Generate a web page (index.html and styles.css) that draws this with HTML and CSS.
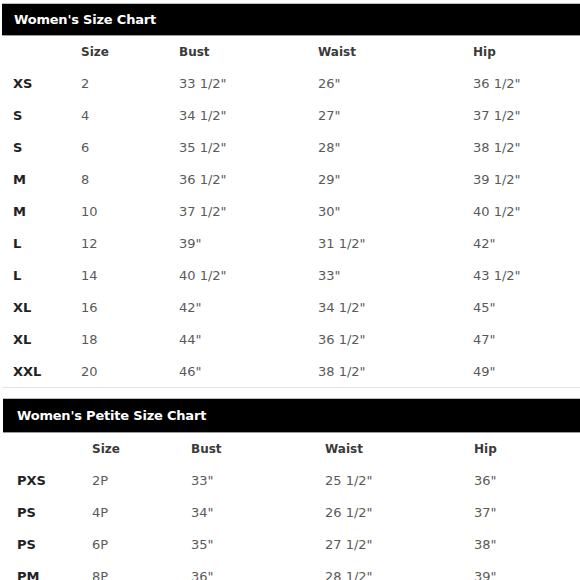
FILE: index.html
```html
<!DOCTYPE html>
<html lang="en">
<head>
<meta charset="utf-8">
<title>Women's Size Chart</title>
<link rel="stylesheet" href="styles.css">
</head>
<body>
<main class="page">
  <section class="chart chart-regular">
    <h2 class="chart-title">Women's Size Chart</h2>
    <div class="chart-grid">
      <span class="cell head-blank"></span><span class="cell head">Size</span><span class="cell head">Bust</span><span class="cell head">Waist</span><span class="cell head">Hip</span>
      <span class="cell label">XS</span><span class="cell">2</span><span class="cell">33 1/2"</span><span class="cell">26"</span><span class="cell">36 1/2"</span>
      <span class="cell label">S</span><span class="cell">4</span><span class="cell">34 1/2"</span><span class="cell">27"</span><span class="cell">37 1/2"</span>
      <span class="cell label">S</span><span class="cell">6</span><span class="cell">35 1/2"</span><span class="cell">28"</span><span class="cell">38 1/2"</span>
      <span class="cell label">M</span><span class="cell">8</span><span class="cell">36 1/2"</span><span class="cell">29"</span><span class="cell">39 1/2"</span>
      <span class="cell label">M</span><span class="cell">10</span><span class="cell">37 1/2"</span><span class="cell">30"</span><span class="cell">40 1/2"</span>
      <span class="cell label">L</span><span class="cell">12</span><span class="cell">39"</span><span class="cell">31 1/2"</span><span class="cell">42"</span>
      <span class="cell label">L</span><span class="cell">14</span><span class="cell">40 1/2"</span><span class="cell">33"</span><span class="cell">43 1/2"</span>
      <span class="cell label">XL</span><span class="cell">16</span><span class="cell">42"</span><span class="cell">34 1/2"</span><span class="cell">45"</span>
      <span class="cell label">XL</span><span class="cell">18</span><span class="cell">44"</span><span class="cell">36 1/2"</span><span class="cell">47"</span>
      <span class="cell label">XXL</span><span class="cell">20</span><span class="cell">46"</span><span class="cell">38 1/2"</span><span class="cell">49"</span>
    </div>
  </section>
  <section class="chart chart-petite">
    <h2 class="chart-title">Women's Petite Size Chart</h2>
    <div class="chart-grid">
      <span class="cell head-blank"></span><span class="cell head">Size</span><span class="cell head">Bust</span><span class="cell head">Waist</span><span class="cell head">Hip</span>
      <span class="cell label">PXS</span><span class="cell">2P</span><span class="cell">33"</span><span class="cell">25 1/2"</span><span class="cell">36"</span>
      <span class="cell label">PS</span><span class="cell">4P</span><span class="cell">34"</span><span class="cell">26 1/2"</span><span class="cell">37"</span>
      <span class="cell label">PS</span><span class="cell">6P</span><span class="cell">35"</span><span class="cell">27 1/2"</span><span class="cell">38"</span>
      <span class="cell label">PM</span><span class="cell">8P</span><span class="cell">36"</span><span class="cell">28 1/2"</span><span class="cell">39"</span>
    </div>
  </section>
</main>
</body>
</html>
```
FILE: styles.css
```css
html, body {
  margin: 0;
  padding: 0;
  background: #ffffff;
}
body {
  font-family: "DejaVu Sans", Verdana, sans-serif;
  width: 580px;
  height: 580px;
  overflow: hidden;
}
.page {
  display: flex;
  flex-direction: column;
  padding-top: 4px;
}
.chart-title {
  margin: 0;
  background: #000000;
  color: #ffffff;
  font-size: 13px;
  font-weight: bold;
  letter-spacing: -0.2px;
  display: flex;
  align-items: center;
  box-shadow: 0 -1px 0 #bdbdbd, 0 1px 0 #9a9a9a;
}
.chart-grid {
  display: grid;
  grid-auto-rows: 32px;
  align-items: center;
  font-size: 13px;
  color: #5a5a5a;
}
.cell {
  white-space: nowrap;
}
.head {
  font-size: 12px;
  font-weight: bold;
  color: #3a3a3a;
  padding-top: 1px;
}
.label {
  font-weight: bold;
  color: #222222;
}
.chart-regular {
  margin-left: 2px;
  border-bottom: 1px solid #e4e4e4;
}
.chart-regular .chart-title {
  height: 31px;
  padding-left: 12px;
}
.chart-regular .chart-grid {
  padding-left: 11px;
  grid-template-columns: 68px 98px 139px 155px 1fr;
}
.chart-petite {
  margin-top: 11px;
  margin-left: 3px;
}
.chart-petite .chart-title {
  height: 33px;
  padding-left: 14px;
}
.chart-petite .chart-grid {
  padding-left: 14px;
  grid-template-columns: 75px 99px 134px 149px 1fr;
}
```
